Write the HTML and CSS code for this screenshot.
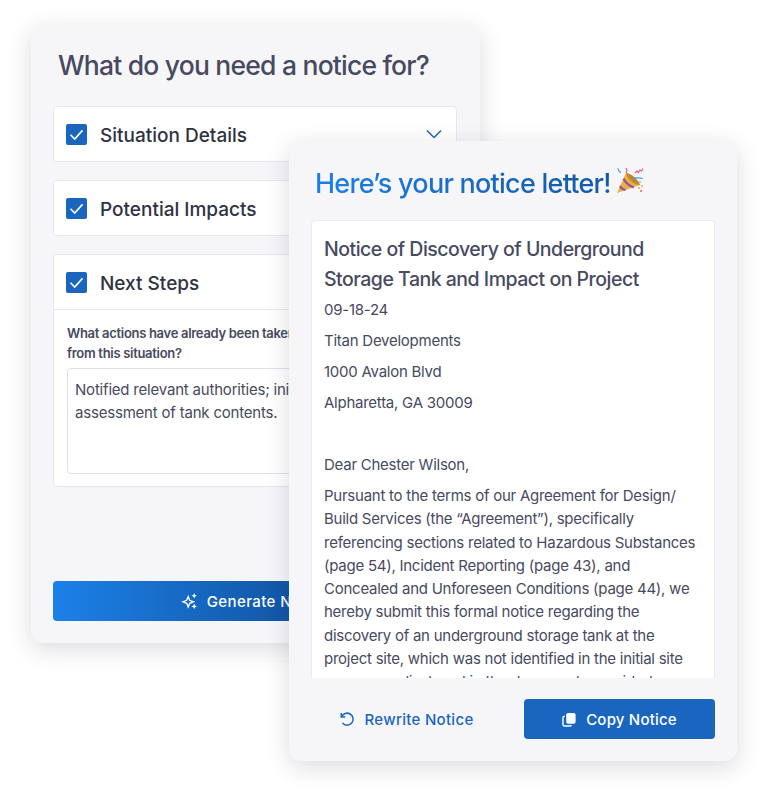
FILE: index.html
```html
<!DOCTYPE html>
<html lang="en">
<head>
    <meta charset="UTF-8">
    <title>Notice letter</title>
    <link rel="stylesheet" href="styles.css">
</head>
<body>
    <div class="stage">
        <div class="card form-card">
            <h1>What do you need a notice for?</h1>

            <div class="section">
                <div class="section-head">
                    <span class="check"><svg viewBox="0 0 21 21"><path d="M4.500 10.800l4.200 4.200 7.800-8.600"/></svg></span>
                    <span class="section-title">Situation Details</span>
                    <svg class="chevron" viewBox="0 0 16 10"><path d="M1 1.500l7 7 7-7"/></svg>
                </div>
            </div>

            <div class="section">
                <div class="section-head">
                    <span class="check"><svg viewBox="0 0 21 21"><path d="M4.500 10.800l4.200 4.200 7.800-8.600"/></svg></span>
                    <span class="section-title">Potential Impacts</span>
                </div>
            </div>

            <div class="section">
                <div class="section-head open">
                    <span class="check"><svg viewBox="0 0 21 21"><path d="M4.500 10.800l4.200 4.200 7.800-8.600"/></svg></span>
                    <span class="section-title">Next Steps</span>
                </div>
                <div class="section-body">
                    <label for="actions">What actions have already been taken to address the issues arising<br>from this situation?</label>
                    <textarea id="actions">Notified relevant authorities; initiated
assessment of tank contents.</textarea>
                </div>
            </div>

            <button class="generate-btn">
                <svg viewBox="0 0 18 18"><path d="M7.200 4.600l1.500 3.700 3.700 1.500-3.700 1.500-1.500 3.700-1.500-3.700L2 9.800l3.700-1.500z" class="outline"/><path d="M13.200 1l.8 2 2 .8-2 .8-.8 2-.8-2-2-.8 2-.8zM13.200 11.600l.8 2 2 .8-2 .8-.8 2-.8-2-2-.8 2-.8z"/></svg>
                Generate Notice
            </button>
        </div>

        <div class="card letter-card">
            <h2><span class="gradient-text">Here’s your notice letter!</span>
                <svg class="party" viewBox="0 0 30 28">
                    <path d="M2 26L11 6c5 .5 12 6 14 12z" fill="#e9b437"/>
                    <path d="M11 6c5 .5 12 6 14 12-5 .5-13-6-14-12z" fill="#c08a2c"/>
                    <path d="M8.500 11.500c1.500 3.500 6 8 10.500 9M5 19c1 2 3 3.500 5.500 4" stroke="#9a4db5" stroke-width="2.200" fill="none"/>
                    <path d="M2.500 1.500c2 .5 0 2 1.500 2.500s1.500 1 1 2M17 12c3-1.500 7-1.500 11-.5" stroke="#4a9ae0" stroke-width="1.200" fill="none"/>
                    <path d="M11 1l1 2.500-1 2.500M20 6l2-2 1.500 1.500L25 3l1.500 1L28 1.500" stroke="#e65a7d" stroke-width="1.200" fill="none"/>
                    <circle cx="25" cy="15" r="0.800" fill="#4a9ae0"/><circle cx="27" cy="19" r="1" fill="#e8b23a"/><circle cx="24" cy="21" r="1" fill="#e8a05a"/><circle cx="26" cy="24" r="1" fill="#e65a7d"/>
                </svg>
            </h2>

            <div class="letter">
                <h3>Notice of Discovery of Underground Storage Tank and Impact on Project</h3>
                <p>09-18-24</p>
                <p>Titan Developments</p>
                <p>1000 Avalon Blvd</p>
                <p>Alpharetta, GA 30009</p>
                <p>&nbsp;</p>
                <p>Dear Chester Wilson,</p>
                <p>Pursuant to the terms of our Agreement for Design/ Build Services (the “Agreement”), specifically referencing sections related to Hazardous Substances (page 54), Incident Reporting (page 43), and Concealed and Unforeseen Conditions (page 44), we hereby submit this formal notice regarding the discovery of an underground storage tank at the project site, which was not identified in the initial site surveys or disclosed in the documents provided.</p>
            </div>

            <div class="actions">
                <button class="rewrite-btn">
                    <svg viewBox="0 0 16 16"><path d="M2.300 2v4h4"/><path d="M2.500 6A6 6 0 1 1 3.500 12"/></svg>
                    Rewrite Notice
                </button>
                <button class="copy-btn">
                    <svg viewBox="0 0 16 16"><rect x="4.500" y="1" width="10" height="11.500" rx="2" class="fill"/><path d="M3 4.500h-.2A1.800 1.800 0 0 0 1 6.300v7A1.800 1.800 0 0 0 2.800 15h5.400A1.800 1.800 0 0 0 10 13.800"/></svg>
                    Copy Notice
                </button>
            </div>
        </div>
    </div>
</body>
</html>
```

FILE: styles.css
```css
* {
    box-sizing: border-box;
}

body {
    margin: 0;
    background: #fff;
    font-family: Inter, "Liberation Sans", sans-serif;
    color: #474a60;
}

.stage {
    position: relative;
    width: 768px;
    height: 801px;
    overflow: hidden;
}

.card {
    position: absolute;
    background: #f6f6f9;
    border-radius: 12px;
    box-shadow: 0 6px 24px rgba(30, 32, 60, 0.16);
}

.form-card {
    left: 31px;
    top: 25px;
    width: 449px;
    height: 618px;
    padding: 0 23px 22px 22px;
    display: flex;
    flex-direction: column;
    gap: 18px;
}

h1 {
    margin: 22px 0 5px 5px;
    height: 36px;
    font-size: 26.500px;
    line-height: 36px;
    font-weight: 500;
    letter-spacing: -0.790px;
}

.section {
    background: #fff;
    border: 1px solid #e6e6f2;
    border-radius: 4px;
}

.section-head {
    display: flex;
    align-items: center;
    height: 54px;
    padding: 0 14px 0 12px;
}

.section-head.open {
    height: 55px;
    border-bottom: 1px solid #e6e6f2;
}

.check {
    width: 21px;
    height: 21px;
    margin-right: 13px;
    background: #1a66bf;
    border-radius: 2px;
}

.check svg {
    display: block;
    fill: none;
    stroke: #fff;
    stroke-width: 1.600;
}

.section-title {
    margin-top: 2px;
    font-size: 19px;
    font-weight: 500;
    color: #2f3242;
}

.chevron {
    width: 16px;
    height: 10px;
    margin-left: auto;
    fill: none;
    stroke: #1a66bf;
    stroke-width: 1.500;
}

.section-body {
    padding: 13px 13px 12px;
}

label {
    display: block;
    margin-bottom: 5px;
    font-size: 13px;
    line-height: 20px;
    font-weight: 600;
    letter-spacing: -0.300px;
    white-space: nowrap;
}

textarea {
    display: block;
    width: 100%;
    height: 106px;
    padding: 9px 7px;
    border: 1px solid #e0e0ec;
    border-radius: 4px;
    font: 15px/23px Inter, "Liberation Sans", sans-serif;
    letter-spacing: -0.200px;
    color: #474a60;
    resize: none;
    overflow: hidden;
}

.generate-btn {
    display: flex;
    align-items: center;
    justify-content: center;
    gap: 8px;
    height: 40px;
    margin-top: auto;
    border: none;
    border-radius: 4px;
    background: linear-gradient(90deg, #1c80e8, #0b3a78);
    color: #fff;
    font: 500 15px Inter, "Liberation Sans", sans-serif;
    letter-spacing: 0.400px;
}

.generate-btn svg {
    width: 18px;
    height: 18px;
    fill: #fff;
}

.generate-btn .outline {
    fill: none;
    stroke: #fff;
    stroke-width: 1.400;
}

.letter-card {
    left: 289px;
    top: 141px;
    width: 448px;
    height: 620px;
    padding: 0 22px 22px;
    display: flex;
    flex-direction: column;
}

h2 {
    display: flex;
    align-items: center;
    gap: 4px;
    height: 40px;
    margin: 22px 0 17px 4px;
    font-size: 27px;
    font-weight: 500;
    letter-spacing: -0.750px;
}

.gradient-text {
    background: linear-gradient(90deg, #1c80e8, #1458a8);
    -webkit-background-clip: text;
    background-clip: text;
    color: transparent;
}

.party {
    width: 30px;
    height: 28px;
    margin-top: -4px;
}

.letter {
    height: 458px;
    padding: 13px 12px 0;
    background: #fff;
    border: 1px solid #e9e9f3;
    border-bottom: none;
    border-radius: 4px 4px 0 0;
    overflow: hidden;
}

h3 {
    margin: 0 0 4px;
    font-size: 19.500px;
    line-height: 30px;
    font-weight: 500;
    letter-spacing: -0.500px;
}

p {
    margin: 0 0 7.750px;
    font-size: 15px;
    line-height: 23.250px;
    letter-spacing: -0.250px;
}

.actions {
    display: flex;
    gap: 22px;
    margin-top: 21px;
}

.actions button {
    flex: 1;
    display: flex;
    align-items: center;
    justify-content: center;
    gap: 9px;
    height: 40px;
    border: none;
    border-radius: 4px;
    font: 500 15px Inter, "Liberation Sans", sans-serif;
    letter-spacing: 0.200px;
}

.actions svg {
    width: 15px;
    height: 15px;
}

.actions .rewrite-btn {
    background: none;
    color: #1a66bf;
    letter-spacing: 0.300px;
}

.actions .rewrite-btn svg {
    width: 16px;
    height: 16px;
    fill: none;
    stroke: #1a66bf;
    stroke-width: 1.500;
}

.copy-btn {
    background: #1a66bf;
    color: #fff;
}

.copy-btn svg {
    fill: none;
    stroke: #fff;
    stroke-width: 1.500;
}

.copy-btn .fill {
    fill: #fff;
    stroke: none;
}
```
